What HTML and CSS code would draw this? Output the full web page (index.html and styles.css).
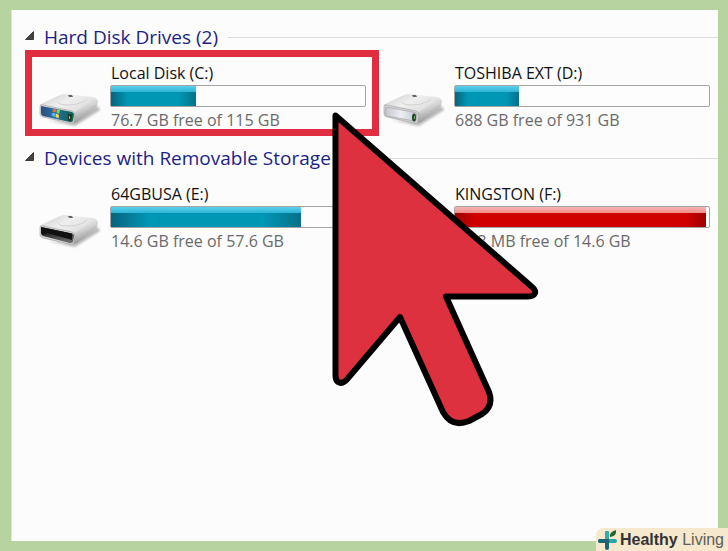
FILE: index.html
```
<!DOCTYPE html>
<html lang="en">
<head>
    <title>Computer</title>
    <meta charset="utf-8">
    <link rel="stylesheet" href="styles.css">
</head>
<body>
    <!-- shared drive body, reused by every icon -->
    <svg class="defs" width="0" height="0" aria-hidden="true">
        <defs>
            <linearGradient id="top" x1="0" y1="0" x2="1" y2="0.6">
                <stop offset="0" stop-color="#c9c9c9"/>
                <stop offset="0.5" stop-color="#efefef"/>
                <stop offset="1" stop-color="#dcdcdc"/>
            </linearGradient>
            <linearGradient id="side" x1="0" y1="0" x2="0.4" y2="1">
                <stop offset="0" stop-color="#fafafa"/>
                <stop offset="0.5" stop-color="#d0d0d0"/>
                <stop offset="1" stop-color="#8c8c8c"/>
            </linearGradient>
            <linearGradient id="plate" x1="0" y1="0" x2="1" y2="0">
                <stop offset="0" stop-color="#c3c4cc"/>
                <stop offset="0.5" stop-color="#eeeef6"/>
                <stop offset="1" stop-color="#c2c3cb"/>
            </linearGradient>
            <linearGradient id="windows" x1="0" y1="0" x2="1" y2="0">
                <stop offset="0" stop-color="#2c4c7c"/>
                <stop offset="0.4" stop-color="#2470a8"/>
                <stop offset="1" stop-color="#12604c"/>
            </linearGradient>
            <linearGradient id="slot" x1="0" y1="0" x2="0.3" y2="1">
                <stop offset="0.3" stop-color="#1a1a1a"/>
                <stop offset="1" stop-color="#666"/>
            </linearGradient>
            <filter id="soft"><feGaussianBlur stdDeviation="1.2"/></filter>
            <g id="drive">
                <path d="M8 27 L36 33 L61 17 L59 13 L30 29 Z" fill="#777" opacity="0.5" filter="url(#soft)"/>
                <path d="M1 13 Q1 11 4 10 L21 2 Q24 1 27 1 L54 4 Q58 5 58 7 L37 19 Q35 20 32 19 Z" fill="url(#top)"/>
                <path d="M35 19 L56 6 Q59 6 59 9 L58 13 Q58 15 56 16 L38 29 Q34 31 34 28 Z" fill="url(#side)"/>
                <path d="M1 13 Q1 11 4 12 L33 18 Q36 19 36 22 L35 28 Q35 31 31 30 L4 24 Q1 23 1 21 Z" fill="#d6d6d6" stroke="#9a9a9a" stroke-width="0.6"/>
                <path d="M19 9 Q20 12 29 12 Q38 12 44 9 L48 6" fill="none" stroke="#d2d2d2" stroke-width="1"/>
                <path d="M29 2 L33 2 L34 4 L30 4 Z" fill="#666"/>
                <path d="M40 24 L57 12" stroke="#b8b8b8" stroke-width="1" opacity="0.7"/>
            </g>
        </defs>
    </svg>

    <main class="panel">
        <section class="group">
            <h2 class="group-title">
                <button class="toggle" type="button" aria-label="Collapse Hard Disk Drives">
                    <svg width="9" height="9" viewBox="0 0 9 9"><path d="M8.5 0.5 V8.5 H0.5 Z" fill="#444" stroke="#222" stroke-width="0.8"/></svg>
                </button>
                <span>Hard Disk Drives (2)</span>
            </h2>
            <div class="drives">
                <div class="drive selected">
                    <svg class="drive-icon" viewBox="0 0 62 36">
                        <use href="#drive"/>
                        <path d="M2 13 L33 19 Q35 20 35 22 L34 27 Q34 29 31 29 L4 23 Q2 22 2 20 Z" fill="url(#windows)"/>
                        <path d="M14 16 L17 15.500 L17 19 L13.500 19 Z" fill="#f36b2c"/>
                        <path d="M18 16 L21 17 L20 21 L17.500 19.500 Z" fill="#8ccf4a"/>
                        <path d="M13 20 L16.500 20 L16 24 L12.500 22.500 Z" fill="#5ab8ee"/>
                        <path d="M17 20.500 L20 22 L19.500 25.500 L16.500 24 Z" fill="#ffd94a"/>
                        <path d="M29 21 L33 21.500 L32 28 L29 27.500 Z" fill="#153a20"/>
                        <path d="M30 23 L31 23 L31 26 L30 26 Z" fill="#79d36d"/>
                    </svg>
                    <div class="info">
                        <div class="name">Local Disk (C:)</div>
                        <div class="bar"><div class="fill" style="width: 33.500%"></div></div>
                        <div class="free">76.7 GB free of 115 GB</div>
                    </div>
                </div>
                <div class="drive">
                    <svg class="drive-icon" viewBox="0 0 62 36">
                        <use href="#drive"/>
                        <path d="M3 14 L32 19.500 Q34 20 34 22 L33 27 Q33 29 31 28 L4 23 Q2 22 2 20 Z" fill="url(#plate)" stroke="#8e8e94" stroke-width="0.5"/>
                        <ellipse cx="31" cy="24.500" rx="2" ry="4" fill="#20442a"/>
                        <path d="M31 23 L32 23 L32 26 L31 26 Z" fill="#74b878"/>
                    </svg>
                    <div class="info">
                        <div class="name">TOSHIBA EXT (D:)</div>
                        <div class="bar"><div class="fill" style="width: 25.200%"></div></div>
                        <div class="free">688 GB free of 931 GB</div>
                    </div>
                </div>
            </div>
        </section>

        <section class="group">
            <h2 class="group-title">
                <button class="toggle" type="button" aria-label="Collapse Devices with Removable Storage">
                    <svg width="9" height="9" viewBox="0 0 9 9"><path d="M8.5 0.5 V8.5 H0.5 Z" fill="#444" stroke="#222" stroke-width="0.8"/></svg>
                </button>
                <span>Devices with Removable Storage</span>
            </h2>
            <div class="drives">
                <div class="drive">
                    <svg class="drive-icon" viewBox="0 0 62 36">
                        <use href="#drive"/>
                        <path d="M2 13 L33 19.500 Q35 20 35 22 L34 28 Q33 29 31 29 L4 22 Q2 21 2 19 Z" fill="url(#slot)"/>
                        <path d="M2 13 L33 19.500 L33 26 L8 19 L3 21 Z" fill="#111"/>
                    </svg>
                    <div class="info">
                        <div class="name">64GBUSA (E:)</div>
                        <div class="bar"><div class="fill" style="width: 74.800%"></div></div>
                        <div class="free">14.6 GB free of 57.6 GB</div>
                    </div>
                </div>
                <div class="drive">
                    <div class="drive-icon"></div>
                    <div class="info">
                        <div class="name">KINGSTON (F:)</div>
                        <div class="bar"><div class="fill full" style="width: 99%"></div></div>
                        <div class="free">98.3 MB free of 14.6 GB</div>
                    </div>
                </div>
            </div>
        </section>
    </main>

    <svg class="pointer" viewBox="0 0 240 340" aria-hidden="true">
        <path d="M15.500 15.500 L211 186 Q216 190 215 193 Q214 196.500 208 196.500 L126 196.500 L169 292 Q174 306 162 314 L149 321 Q132 328 123 312 L80 217 L29 277 Q23 285 18 282 Q15.500 280 15.500 275 Z"/>
    </svg>

    <div class="brand">
        <svg class="brand-icon" width="20" height="22" viewBox="0 0 20 22">
            <path d="M9 4 V19" stroke="#176b78" stroke-width="4" stroke-linecap="round"/>
            <path d="M9 12 H17" stroke="#2aa5a5" stroke-width="4" stroke-linecap="round"/>
            <path d="M9 4 V12 H2" fill="none" stroke="#35aaa8" stroke-width="4" stroke-linecap="round"/>
            <path d="M2 12 H9 V18" fill="none" stroke="#1b6474" stroke-width="4" stroke-linecap="round"/>
            <path d="M12 8 Q11 3 18 1 Q19 7 12 8 Z" fill="#28652f"/>
        </svg>
        <div><b>Healthy</b> <span>Living</span></div>
    </div>
</body>
</html>
```

FILE: styles.css
```
* {
    box-sizing: border-box;
}
body {
    margin: 0;
    min-height: 100vh;
    padding: 10px 10px 10px 12px;
    display: flex;
    position: relative;
    background-color: #b7d3a0;
    font-family: "Open Sans", "Noto Sans", sans-serif;
}
.defs {
    position: absolute;
}
.panel {
    flex: 1;
    padding: 14px 0 0 13px;
    background-color: #fcfcfc;
    box-shadow: -1px 0 0 #d5e8e6;
}
.group {
    margin-bottom: 9px;
}
.group-title {
    display: flex;
    align-items: center;
    gap: 10px;
    height: 26px;
    margin: 0;
    color: #1c1f85;
    font-size: 19px;
    font-weight: normal;
    line-height: 24px;
    white-space: nowrap;
}
.group-title::after {
    content: "";
    flex: 1;
    height: 1px;
    background-color: #dcdcdc;
}
.toggle {
    display: flex;
    padding: 0 0 4px;
    border: none;
    background: none;
    cursor: pointer;
}
.drives {
    display: grid;
    grid-template-columns: 1fr 1fr;
    padding-right: 5px;
}
.drive {
    position: relative;
    display: flex;
    gap: 9px;
    padding: 13px 3px 6px 14px;
}
/* frame around the picked drive, runs a little into the next column */
.drive.selected::after {
    content: "";
    position: absolute;
    inset: 0 -10px 0 0;
    border: 7px solid #e02d3f;
}
.drive-icon {
    flex: none;
    width: 62px;
    height: 36px;
    margin-top: 30px;
}
.info {
    flex: 1;
    white-space: nowrap;
}
.name,
.free {
    padding-left: 1px;
    font-size: 16px;
    line-height: 20px;
}
.name {
    color: #111;
}
.free {
    color: #6a6a6a;
}
.bar {
    height: 22px;
    margin: 2px 0 3px;
    border: 1px solid #a4a4a4;
    border-radius: 2px;
    background-color: #fdfdfd;
}
.fill {
    height: 100%;
    background:
        linear-gradient(#5bd0ec, #2fb4d6) top / 100% 6px no-repeat,
        linear-gradient(90deg, #07637c, #0097b5 20%, #0097b5 80%, #07708a);
}
.fill.full {
    background:
        linear-gradient(#f7b5b5, #f08a8a) top / 100% 6px no-repeat,
        linear-gradient(90deg, #9d0000, #d00000 8%, #d00000 92%, #9d0000);
}
.pointer {
    position: absolute;
    top: 100px;
    left: 320px;
    width: 240px;
    height: 340px;
    fill: #de313f;
    stroke: #000;
    stroke-width: 6px;
    stroke-linejoin: round;
}
.brand {
    position: absolute;
    right: 0;
    bottom: 0;
    display: flex;
    align-items: center;
    gap: 2px;
    height: 23px;
    padding: 0 4px 0 2px;
    border-radius: 8px 0 0 0;
    background-color: #f5e8cc;
    color: #333;
    font-family: "Liberation Sans", Arial, sans-serif;
    font-size: 16px;
    line-height: 22px;
}
.brand span {
    color: #5c5c58;
}
```
